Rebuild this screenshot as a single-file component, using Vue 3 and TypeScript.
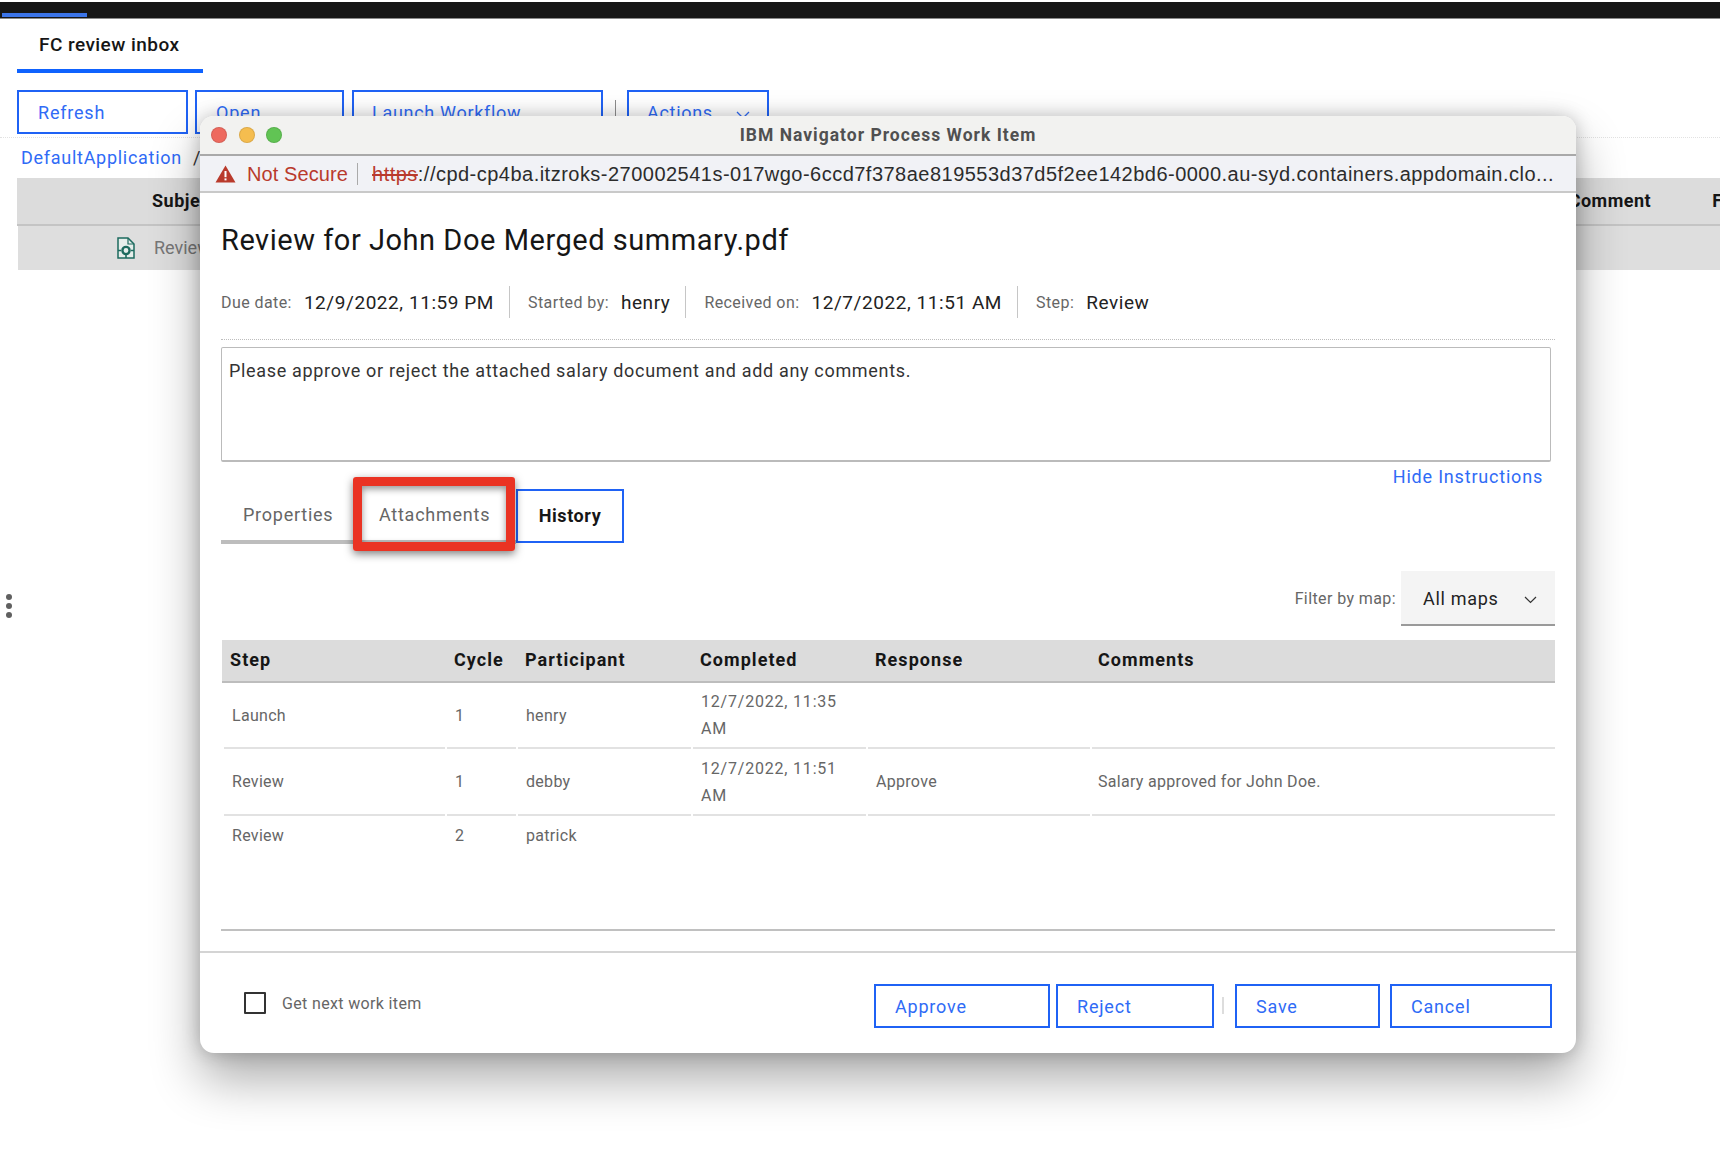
<script setup lang="ts">
interface Row { step: string; cycle: string; who: string; done: string; resp: string; note: string; cls: string }
const heads: string[] = ['Step', 'Cycle', 'Participant', 'Completed', 'Response', 'Comments']
const rows: Row[] = [
  { step: 'Launch', cycle: '1', who: 'henry', done: '12/7/2022, 11:35 AM', resp: '', note: '', cls: 'r1' },
  { step: 'Review', cycle: '1', who: 'debby', done: '12/7/2022, 11:51 AM', resp: 'Approve', note: 'Salary approved for John Doe.', cls: 'r2' },
  { step: 'Review', cycle: '2', who: 'patrick', done: '', resp: '', note: '', cls: 'r3' },
]
const meta = [
  { k: 'Due date:', v: '12/9/2022, 11:59 PM' },
  { k: 'Started by:', v: 'henry' },
  { k: 'Received on:', v: '12/7/2022, 11:51 AM' },
  { k: 'Step:', v: 'Review' },
]
const url = '://cpd-cp4ba.itzroks-270002541s-017wgo-6ccd7f378ae819553d37d5f2ee142bd6-0000.au-syd.containers.appdomain.clo...'
</script>

<template>
  <div class="page">
    <div class="topbar"><span class="progress"></span></div>
    <div class="pagetab">FC review inbox</div>
    <div class="toolbar">
      <button class="btn w-refresh">Refresh</button>
      <button class="btn w-open">Open</button>
      <button class="btn w-launch">Launch Workflow</button>
      <span class="tool-sep"></span>
      <button class="btn w-actions">Actions
        <svg class="chev" width="14" height="8" viewBox="0 0 14 8"><path d="M1 1l6 6 6-6" fill="none" stroke="#2f6bf6" stroke-width="1.3"/></svg>
      </button>
    </div>
    <div class="crumbs"><a class="link">DefaultApplication</a><span class="slash">/</span></div>
    <div class="bg-head">
      <span class="bg-subject">Subject</span>
      <span class="bg-comment">Comment</span>
      <span class="bg-from">F</span>
    </div>
    <div class="bg-row">
      <svg class="doc" width="18" height="22" viewBox="0 0 18 22">
        <path d="M1 1h10l6 6v14H1z" fill="#e6eeeb" stroke="#1d6b5f" stroke-width="1.5"/>
        <path d="M11 1v6h6" fill="none" stroke="#1d6b5f" stroke-width="1.2"/>
        <circle cx="9" cy="13.5" r="3.6" fill="none" stroke="#1d6b5f" stroke-width="2.4"/>
        <path d="M1 13.5h3M14 13.5h3M9 18v3" stroke="#1d6b5f" stroke-width="1.6"/>
      </svg>
      <span class="bg-text">Review</span>
    </div>
    <div class="grip"><i></i><i></i><i></i></div>

    <section class="win">
      <header class="titlebar">
        <div class="lights"><i class="l red"></i><i class="l yellow"></i><i class="l green"></i></div>
        <div class="wintitle">IBM Navigator Process Work Item</div>
        <div></div>
      </header>
      <div class="urlbar">
        <svg class="warn" width="21" height="18" viewBox="0 0 21 18">
          <path d="M10.5 0.5L20.5 17.5H0.5z" fill="#b93a2c"/>
          <rect x="9.5" y="6" width="2" height="6.2" fill="#fff"/>
          <rect x="9.5" y="13.4" width="2" height="2" fill="#fff"/>
        </svg>
        <span class="notsecure">Not Secure</span>
        <span class="url-sep"></span>
        <span class="url"><s class="https">https</s>{{ url }}</span>
      </div>

      <div class="body">
        <h1 class="heading">Review for John Doe Merged summary.pdf</h1>
        <div class="meta">
          <div v-for="(m, i) in meta" :key="m.k" class="meta-item" :class="{ last: i === meta.length - 1 }">
            <span class="mk">{{ m.k }}</span><span class="mv">{{ m.v }}</span>
          </div>
        </div>
        <div class="dots"></div>
        <div class="instructions">Please approve or reject the attached salary document and add any comments.</div>
        <div class="hide"><a class="link">Hide Instructions</a></div>
        <div class="tabs">
          <div class="tab t-prop">Properties</div>
          <div class="tab t-att">Attachments</div>
          <div class="tab t-his">History</div>
        </div>
        <div class="filter">
          <span class="flabel">Filter by map:</span>
          <div class="select">All maps
            <svg class="sel-chev" width="13" height="8" viewBox="0 0 13 8"><path d="M1 1l5.5 5.5L12 1" fill="none" stroke="#333" stroke-width="1.2"/></svg>
          </div>
        </div>
        <div class="tablewrap">
          <div class="grid thead">
            <div v-for="h in heads" :key="h" class="th">{{ h }}</div>
          </div>
          <div v-for="r in rows" :key="r.step + r.cycle" class="grid trow" :class="r.cls">
            <div class="td">{{ r.step }}</div>
            <div class="td">{{ r.cycle }}</div>
            <div class="td">{{ r.who }}</div>
            <div class="td date">{{ r.done }}</div>
            <div class="td">{{ r.resp }}</div>
            <div class="td">{{ r.note }}</div>
          </div>
        </div>
      </div>

      <footer class="foot">
        <label class="next"><span class="box"></span><span>Get next work item</span></label>
        <div class="actions">
          <button class="btn f-approve">Approve</button>
          <button class="btn f-reject">Reject</button>
          <span class="foot-sep"></span>
          <button class="btn f-save">Save</button>
          <button class="btn f-cancel">Cancel</button>
        </div>
      </footer>
      <div class="highlight"></div>
    </section>
  </div>
</template>

<style>
html, body { margin: 0; background: #fff; }
</style>

<style scoped>
.page {
  position: relative;
  width: 1720px;
  height: 1156px;
  overflow: hidden;
  background: #fff;
  font-family: Roboto, "Liberation Sans", sans-serif;
  color: #161616;
  padding-top: 2px;
  box-sizing: border-box;
}
.topbar {
  height: 16px;
  background: #161616;
  border-bottom: 1px solid #8a8a8a;
  display: flex;
  align-items: flex-end;
}
.progress { width: 85px; height: 4px; margin: 0 0 1px 2px; background: #3b74e8; }
.pagetab {
  margin-left: 17px;
  width: 164px;
  height: 50px;
  padding-left: 22px;
  line-height: 52px;
  font-size: 19px;
  font-weight: 500;
  letter-spacing: 0.45px;
  white-space: nowrap;
  border-bottom: 4px solid #0f62fe;
}
.toolbar {
  display: flex;
  margin-top: 17px;
  padding-left: 17px;
  padding-bottom: 3px;
  border-bottom: 1px dotted #e2e2e2;
  height: 44px;
}
.btn {
  box-sizing: border-box;
  height: 44px;
  padding: 0 0 0 19px;
  border: 2px solid #1f62f5;
  background: #fff;
  color: #2f6bf6;
  font: 18px Roboto, "Liberation Sans", sans-serif;
  letter-spacing: 0.8px;
  text-align: left;
  flex: none;
}
.w-refresh { width: 171px; }
.w-open { width: 149px; margin-left: 7px; }
.w-launch { width: 251px; margin-left: 8px; }
.w-launch, .w-actions { padding-left: 18px; letter-spacing: 0.7px; }
.tool-sep { width: 1px; height: 22px; margin: 10px 11px 0 12px; background: #8d8d8d; }
.w-actions { width: 142px; }
.chev { margin-left: 18px; }
.crumbs { height: 38px; padding-left: 21px; padding-bottom: 2px; display: flex; align-items: center; gap: 11px; font-size: 18px; letter-spacing: 0.72px; }
.link { color: #2f6bf6; }
.slash { color: #333; }
.bg-head {
  height: 44px;
  padding-bottom: 2px;
  margin-left: 17px;
  background: #dcdcdc;
  border-bottom: 2px solid #c4c4c4;
  display: flex;
  align-items: center;
  font-size: 18px;
  font-weight: 700;
  padding-left: 135px;
  letter-spacing: 0.5px;
}
.bg-comment { margin-left: 1352px; }
.bg-from { margin-left: 61px; }
.bg-row {
  height: 44px;
  margin-left: 18px;
  background: #dedede;
  display: flex;
  align-items: center;
  padding-left: 99px;
  gap: 19px;
}
.doc { flex: none; }
.bg-text { font-size: 18px; color: #777; padding-bottom: 2px; }
.grip { position: absolute; left: 6px; top: 594px; display: flex; flex-direction: column; gap: 3px; }
.grip i { width: 6px; height: 6px; border-radius: 50%; background: #606060; }

.win {
  position: absolute;
  left: 200px;
  top: 116px;
  width: 1376px;
  height: 937px;
  background: #fff;
  border-radius: 14px;
  box-shadow: 0 26px 50px rgba(0, 0, 0, 0.33), 0 0 18px rgba(0, 0, 0, 0.22);
  display: flex;
  flex-direction: column;
}
.titlebar {
  height: 38px;
  flex: none;
  display: grid;
  grid-template-columns: 1fr auto 1fr;
  align-items: center;
  background: #f2f2f0;
  border-bottom: 2px solid #a9a9a9;
  border-radius: 14px 14px 0 0;
}
.lights { display: flex; gap: 11.5px; padding-left: 11px; }
.l { width: 16px; height: 16px; border-radius: 50%; box-sizing: border-box; border: 1px solid rgba(0,0,0,.1); }
.red { background: #ee6a5f; }
.yellow { background: #f5bd4f; }
.green { background: #61c454; }
.wintitle { font-size: 17.5px; font-weight: 700; letter-spacing: 1px; color: #505050; }
.urlbar {
  height: 34px;
  padding-top: 1px;
  flex: none;
  display: flex;
  align-items: center;
  padding-left: 15px;
  background: #f1f2f6;
  border-bottom: 2px solid #c9c9c9;
  font-family: "Liberation Sans", Arial, sans-serif;
  font-size: 20px;
  white-space: nowrap;
}
.warn { flex: none; }
.notsecure { margin-left: 11px; color: #b93a2c; letter-spacing: 0.1px; }
.url-sep { width: 1px; height: 22px; background: #aaa; margin: 0 14px 0 9px; }
.url { color: #2c2c2c; letter-spacing: 0.48px; }
.https { color: #b93a2c; }
.body { flex: 1; padding: 0 21px; display: flex; flex-direction: column; min-height: 0; }
.heading {
  margin: 29px 0 0;
  font-size: 29px;
  line-height: 36px;
  font-weight: 400;
  letter-spacing: 0.53px;
}
.meta { display: flex; margin-top: 28px; height: 32px; }
.meta-item {
  display: flex;
  align-items: center;
  padding-right: 15px;
  margin-right: 18px;
  border-right: 1px solid #c6c6c6;
}
.meta-item.last { border-right: 0; }
.mk { font-size: 16px; color: #666; margin-right: 12px; letter-spacing: 0.42px; }
.mv { font-size: 19px; color: #222; letter-spacing: 0.56px; }
.dots { margin-top: 21px; border-top: 1px dotted #bdbdbd; }
.instructions {
  box-sizing: border-box;
  margin-top: 7px;
  width: 1330px;
  height: 115px;
  flex: none;
  padding: 11px 7px;
  border: 1px solid #bbb;
  border-bottom-width: 2px;
  border-radius: 2px;
  font-size: 18px;
  line-height: 24px;
  letter-spacing: 0.67px;
  color: #333;
}
.hide { height: 24px; margin-top: 3px; padding-right: 12px; text-align: right; font-size: 18px; line-height: 24px; letter-spacing: 0.8px; }
.tabs { display: flex; height: 54px; flex: none; }
.tab { box-sizing: border-box; height: 55px; display: flex; align-items: center; font-size: 18px; letter-spacing: 0.75px; color: #666; }
.t-prop { width: 134px; padding-left: 22px; border-bottom: 4px solid #bdbdbd; }
.t-att { width: 161px; padding-left: 24px; border-bottom: 4px solid #bdbdbd; }
.t-his { width: 108px; height: 54px; padding-bottom: 2px; justify-content: center; border: 2px solid #1f62f5; color: #161616; font-weight: 700; letter-spacing: 0.6px; }
.filter { display: flex; justify-content: flex-end; align-items: center; gap: 5px; margin-top: 28px; height: 55px; flex: none; }
.flabel { font-size: 16px; color: #666; letter-spacing: 0.4px; }
.select {
  box-sizing: border-box;
  width: 154px;
  height: 55px;
  padding: 2px 18px 0 22px;
  display: flex;
  align-items: center;
  justify-content: space-between;
  background: #f4f4f4;
  border-bottom: 2px solid #9a9a9a;
  font-size: 18px;
  letter-spacing: 0.7px;
  color: #222;
}
.sel-chev { margin-top: 2px; }
.tablewrap { margin-top: 14px; height: 291px; flex: none; box-sizing: border-box; border-bottom: 2px solid #c0c0c0; }
.grid { display: grid; grid-template-columns: 221px 69px 173px 173px 222px 1fr; column-gap: 2px; padding-left: 2px; }
.thead { margin-left: 1px; padding-left: 1px; padding-bottom: 2px; height: 43px; box-sizing: border-box; background: #dcdcdc; border-bottom: 2px solid #bdbdbd; align-items: center; }
.th { padding-left: 8px; font-size: 18px; font-weight: 700; letter-spacing: 1.05px; color: #161616; white-space: nowrap; }
.th:first-child { padding-left: 7px; }
.th:last-child { padding-left: 7px; }
.trow { padding-left: 3px; }
.td {
  box-sizing: border-box;
  padding: 0 8px;
  display: flex;
  align-items: center;
  font-size: 16px;
  line-height: 27px;
  letter-spacing: 0.3px;
  color: #666;
  border-bottom: 2px solid #e2e2e2;
}
.td:last-child { padding-left: 6px; }
.td.date { padding-right: 16px; letter-spacing: 0.8px; }
.r1 .td { height: 66px; }
.r2 .td { height: 67px; }
.r3 .td { height: 39px; border-bottom: 0; }
.foot {
  margin-top: 20px;
  height: 102px;
  flex: none;
  box-sizing: border-box;
  border-top: 2px solid #d4d4d4;
  display: flex;
  justify-content: space-between;
  padding: 31px 24px 0 44px;
  border-radius: 0 0 14px 14px;
}
.next { display: flex; align-items: center; height: 22px; margin-top: 8px; gap: 16px; font-size: 16px; letter-spacing: 0.35px; color: #666; }
.box { box-sizing: border-box; width: 22px; height: 22px; border: 2px solid #333; border-radius: 1px; }
.actions { display: flex; align-items: flex-start; }
.f-approve { width: 176px; }
.f-reject { width: 158px; margin-left: 6px; }
.foot-sep { width: 2px; height: 17px; margin: 13px 11px 0 8px; background: #ddd; }
.f-save { width: 145px; }
.f-cancel { width: 162px; margin-left: 10px; }
.highlight {
  position: absolute;
  left: 153px;
  top: 361px;
  width: 162px;
  height: 74px;
  box-sizing: border-box;
  border: 9px solid #ea3323;
  border-radius: 3px;
  box-shadow: 0 3px 8px rgba(0, 0, 0, 0.5), inset 0 3px 7px rgba(0, 0, 0, 0.42);
}
</style>
